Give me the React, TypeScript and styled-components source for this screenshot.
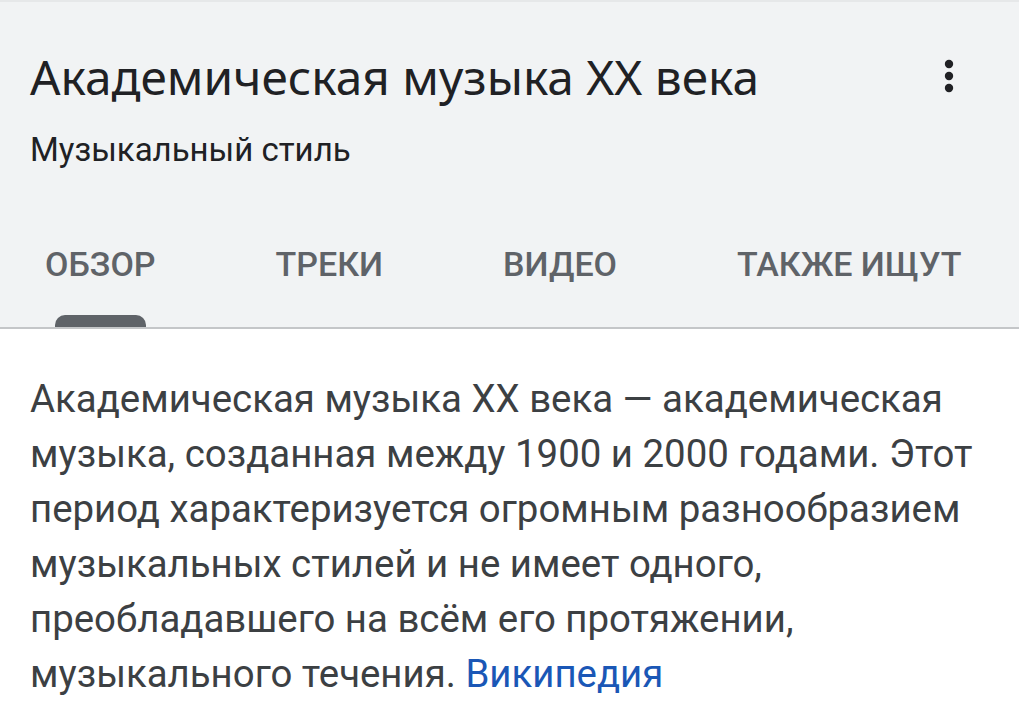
import React from "react";
import styled, { createGlobalStyle } from "styled-components";

const Global = createGlobalStyle`
  html, body { margin: 0; padding: 0; background: #ffffff; }
  body { font-family: Roboto, "Noto Sans", sans-serif; }
`;

const Page = styled.div`
  width: 1019px;
  height: 708px;
  overflow: hidden;
  background: #ffffff;
`;

const Header = styled.header`
  background: #f1f3f4;
  border-top: 2px solid #e6e8e9;
  border-bottom: 2px solid #c4c6c8;
`;

const TitleRow = styled.div`
  display: flex;
  align-items: flex-start;
  justify-content: space-between;
  padding: 45px 0 0 30px;
`;

const Title = styled.h1`
  margin: 0;
  font-family: "Noto Sans", sans-serif;
  font-weight: 400;
  font-size: 47.8px;
  line-height: 60px;
  color: #202124;
`;

const MoreButton = styled.button`
  border: 0;
  background: transparent;
  padding: 0;
  margin: 9px 62px 0 0;
  width: 16px;
  height: 40px;
  display: flex;
  align-items: center;
  justify-content: center;
`;

const Subtitle = styled.div`
  padding: 0 0 0 30px;
  margin-top: 23px;
  font-family: Roboto, sans-serif;
  font-size: 33px;
  line-height: 40px;
  color: #202124;
`;

const Tabs = styled.nav`
  display: flex;
  gap: 120px;
  padding: 0 0 0 45px;
  margin-top: 74px;
`;

const Tab = styled.div<{ $active?: boolean }>`
  position: relative;
  font-family: Roboto, sans-serif;
  font-weight: 500;
  font-size: 34px;
  line-height: 40px;
  color: #5f6368;
  padding-bottom: 43px;
  &::after {
    content: "";
    display: ${(p) => (p.$active ? "block" : "none")};
    position: absolute;
    left: 10px;
    right: 10px;
    bottom: 0;
    height: 12px;
    background: #5f6368;
    border-radius: 10px 10px 0 0;
  }
`;

const Body = styled.p`
  margin: 0;
  padding: 42px 30px 0 30px;
  font-family: Roboto, sans-serif;
  font-size: 38.4px;
  line-height: 55px;
  color: #3c4043;
`;

const Link = styled.a`
  color: #1a57b6;
  text-decoration: none;
`;

const Dots = () => (
  <svg width="10" height="34" viewBox="0 0 10 34">
    <circle cx="5" cy="5" r="4.2" fill="#202124" />
    <circle cx="5" cy="17" r="4.2" fill="#202124" />
    <circle cx="5" cy="29" r="4.2" fill="#202124" />
  </svg>
);

export default function App() {
  return (
    <Page>
      <Global />
      <Header>
        <TitleRow>
          <Title>Академическая музыка XX века</Title>
          <MoreButton aria-label="Ещё">
            <Dots />
          </MoreButton>
        </TitleRow>
        <Subtitle>Музыкальный стиль</Subtitle>
        <Tabs>
          <Tab $active>ОБЗОР</Tab>
          <Tab>ТРЕКИ</Tab>
          <Tab>ВИДЕО</Tab>
          <Tab>ТАКЖЕ ИЩУТ</Tab>
        </Tabs>
      </Header>
      <Body>
        Академическая музыка XX века — академическая музыка, созданная между
        1900 и 2000 годами. Этот период характеризуется огромным разнообразием
        музыкальных стилей и не имеет одного, преобладавшего на всём его
        протяжении, музыкального течения. <Link href="#">Википедия</Link>
      </Body>
    </Page>
  );
}
